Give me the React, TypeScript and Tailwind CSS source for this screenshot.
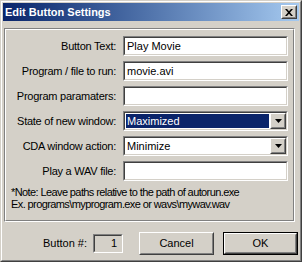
import React from 'react'

const Sunken = ({ children, className = '', bg = 'bg-white' }: { children?: React.ReactNode; className?: string; bg?: string }) => (
    <div className={`border border-t-[#808080] border-l-[#808080] border-b-white border-r-white ${className}`}>
        <div className={`h-full flex items-center border border-t-[#404040] border-l-[#404040] border-b-[#d4d0c8] border-r-[#d4d0c8] ${bg}`}>
            {children}
        </div>
    </div>
)

const Raised = ({ children, className = '' }: { children?: React.ReactNode; className?: string }) => (
    <div className={`border border-t-white border-l-white border-b-[#404040] border-r-[#404040] ${className}`}>
        <div className="h-full flex items-center justify-center border border-t-[#d4d0c8] border-l-[#d4d0c8] border-b-[#808080] border-r-[#808080] bg-[#d4d0c8]">
            {children}
        </div>
    </div>
)

const DropArrow = () => (
    <Raised className="w-[16px] h-full">
        <svg width="7" height="4" viewBox="0 0 7 4"><path d="M0 0h7L3.5 4z" fill="#000" /></svg>
    </Raised>
)

const Row = ({ label, children }: { label: string; children: React.ReactNode }) => (
    <div className="flex items-center h-[20px]">
        <div className="w-[111px] text-right pr-[1px] tracking-[-0.25px]">{label}</div>
        <div className="ml-[6px] w-[165px] h-full">{children}</div>
    </div>
)

export default function App() {
    return (
        <div className="w-[302px] h-[262px] bg-[#d4d0c8] text-[11px] text-black font-['Liberation_Sans',Arial,sans-serif] leading-none select-none">
            <div className="h-full border border-t-[#d4d0c8] border-l-[#d4d0c8] border-b-[#404040] border-r-[#404040]">
                <div className="h-full flex flex-col border border-t-white border-l-white border-b-[#808080] border-r-[#808080] p-[1px]">
                    {/* title bar */}
                    <div className="h-[18px] flex items-center justify-between pl-[2px] pr-[2px] bg-gradient-to-r from-[#0a246a] to-[#a6caf0]">
                        <span className="text-white font-bold text-[11px]">Edit Button Settings</span>
                        <Raised className="w-[16px] h-[14px]">
                            <svg width="8" height="7" viewBox="0 0 8 7">
                                <path d="M0 0h2l2 2.2L6 0h2L5 3.5 8 7H6L4 4.8 2 7H0l3-3.5z" fill="#000" />
                            </svg>
                        </Raised>
                    </div>

                    {/* group box */}
                    <div className="mt-[7px] ml-[1px] mr-[4px] h-[194px] border border-t-[#808080] border-l-[#808080] border-b-white border-r-white">
                        <div className="h-full border border-t-white border-l-white border-b-[#808080] border-r-[#808080] pt-[6px]">
                            <div className="flex flex-col gap-[5px]">
                                <Row label="Button Text:">
                                    <Sunken className="h-full"><span className="pl-[2px]">Play Movie</span></Sunken>
                                </Row>
                                <Row label="Program / file to run:">
                                    <Sunken className="h-full"><span className="pl-[2px]">movie.avi</span></Sunken>
                                </Row>
                                <Row label="Program paramaters:">
                                    <Sunken className="h-full" />
                                </Row>
                                <Row label="State of new window:">
                                    <Sunken className="h-full">
                                        <div className="flex-1 h-full p-[1px]">
                                            <div className="h-full bg-[#0a246a] text-white flex items-center pl-[1px]">Maximized</div>
                                        </div>
                                        <DropArrow />
                                    </Sunken>
                                </Row>
                                <Row label="CDA window action:">
                                    <Sunken className="h-full">
                                        <div className="flex-1 pl-[2px]">Minimize</div>
                                        <DropArrow />
                                    </Sunken>
                                </Row>
                                <Row label="Play a WAV file:">
                                    <Sunken className="h-full" />
                                </Row>
                            </div>
                            <div className="mt-[5px] pl-[5px] leading-[12px] tracking-[-0.6px]">
                                <div>*Note: Leave paths relative to the path of autorun.exe</div>
                                <div>Ex. programs\myprogram.exe or wavs\mywav.wav</div>
                            </div>
                        </div>
                    </div>

                    {/* bottom row */}
                    <div className="mt-[10px] flex items-center pl-[40px]">
                        <span className="w-[46px]">Button #:</span>
                        <Sunken className="ml-[4px] w-[30px] h-[19px]" bg="bg-[#d4d0c8]">
                            <span className="flex-1 text-right pr-[4px]">1</span>
                        </Sunken>
                        <Raised className="ml-[16px] w-[75px] h-[23px]">Cancel</Raised>
                        <div className="ml-[9px] w-[75px] h-[23px] border border-black">
                            <Raised className="h-full">OK</Raised>
                        </div>
                    </div>
                </div>
            </div>
        </div>
    )
}
